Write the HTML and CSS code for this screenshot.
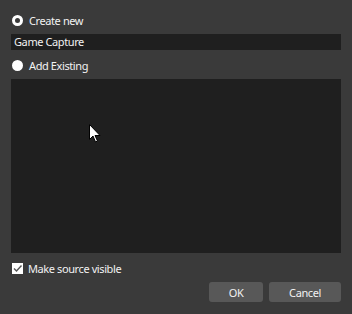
FILE: index.html
```html
<!DOCTYPE html>
<html lang="en">
<head>
    <meta charset="UTF-8">
    <title>Add Source</title>
    <link rel="stylesheet" href="styles.css">
</head>
<body>
    <div class="dialog">
        <label class="radio-row">
            <span class="radio"></span>
            <span>Create new</span>
        </label>
        <div class="name-box">Game Capture</div>
        <label class="radio-row second">
            <span class="radio filled"></span>
            <span>Add Existing</span>
        </label>
        <div class="source-list">
            <svg class="cursor" width="13" height="20" viewBox="0 0 13 20">
                <path d="M0.5 0.5 L0.5 15.5 L4 12 L6.5 18 L8.5 17 L6 11.5 L11 11.5 Z" fill="#ffffff" stroke="#000000" stroke-width="1"/>
            </svg>
        </div>
        <label class="check-row">
            <span class="checkbox">
                <svg width="11" height="11" viewBox="0 0 11 11">
                    <path d="M2 5.5 L4.5 8 L9.5 2.5" fill="none" stroke="#555555" stroke-width="1.4"/>
                </svg>
            </span>
            <span>Make source visible</span>
        </label>
        <div class="button-row">
            <button class="button ok">OK</button>
            <button class="button cancel">Cancel</button>
        </div>
    </div>
</body>
</html>
```

FILE: styles.css
```css
body {
    margin: 0;
    background-color: #3a3a3a;
    font-family: "Noto Sans", sans-serif;
    font-size: 11px;
    letter-spacing: -0.4px;
    color: #f2f2f2;
}

.dialog {
    display: flex;
    flex-direction: column;
    padding: 12px 11px 11px 11px;
}

.radio-row,
.check-row {
    display: flex;
    align-items: center;
    height: 16px;
}

.radio {
    box-sizing: border-box;
    width: 11px;
    height: 11px;
    margin-left: 1px;
    margin-right: 6px;
    border: 3px solid #ffffff;
    border-radius: 50%;
}

.radio.filled {
    background-color: #ffffff;
}

.radio-row.second {
    margin-top: 7px;
}

.name-box {
    margin-top: 6px;
    height: 16px;
    line-height: 16px;
    padding-left: 3px;
    background-color: #1f1f1f;
}

.source-list {
    position: relative;
    margin-top: 6px;
    height: 174px;
    background-color: #1f1f1f;
}

.cursor {
    position: absolute;
    left: 78px;
    top: 45px;
}

.check-row {
    margin-top: 7px;
}

.checkbox {
    width: 11px;
    height: 11px;
    margin-left: 1px;
    margin-right: 5px;
    background-color: #ffffff;
    display: flex;
}

.button-row {
    display: flex;
    justify-content: flex-end;
    gap: 6px;
    margin-top: 6px;
}

.button {
    height: 20px;
    padding: 0;
    border: none;
    border-radius: 3px;
    background-color: #585858;
    color: #f2f2f2;
    font-family: "Noto Sans", sans-serif;
    font-size: 11px;
    letter-spacing: -0.4px;
}

.button.ok {
    width: 54px;
}

.button.cancel {
    width: 72px;
}
```
